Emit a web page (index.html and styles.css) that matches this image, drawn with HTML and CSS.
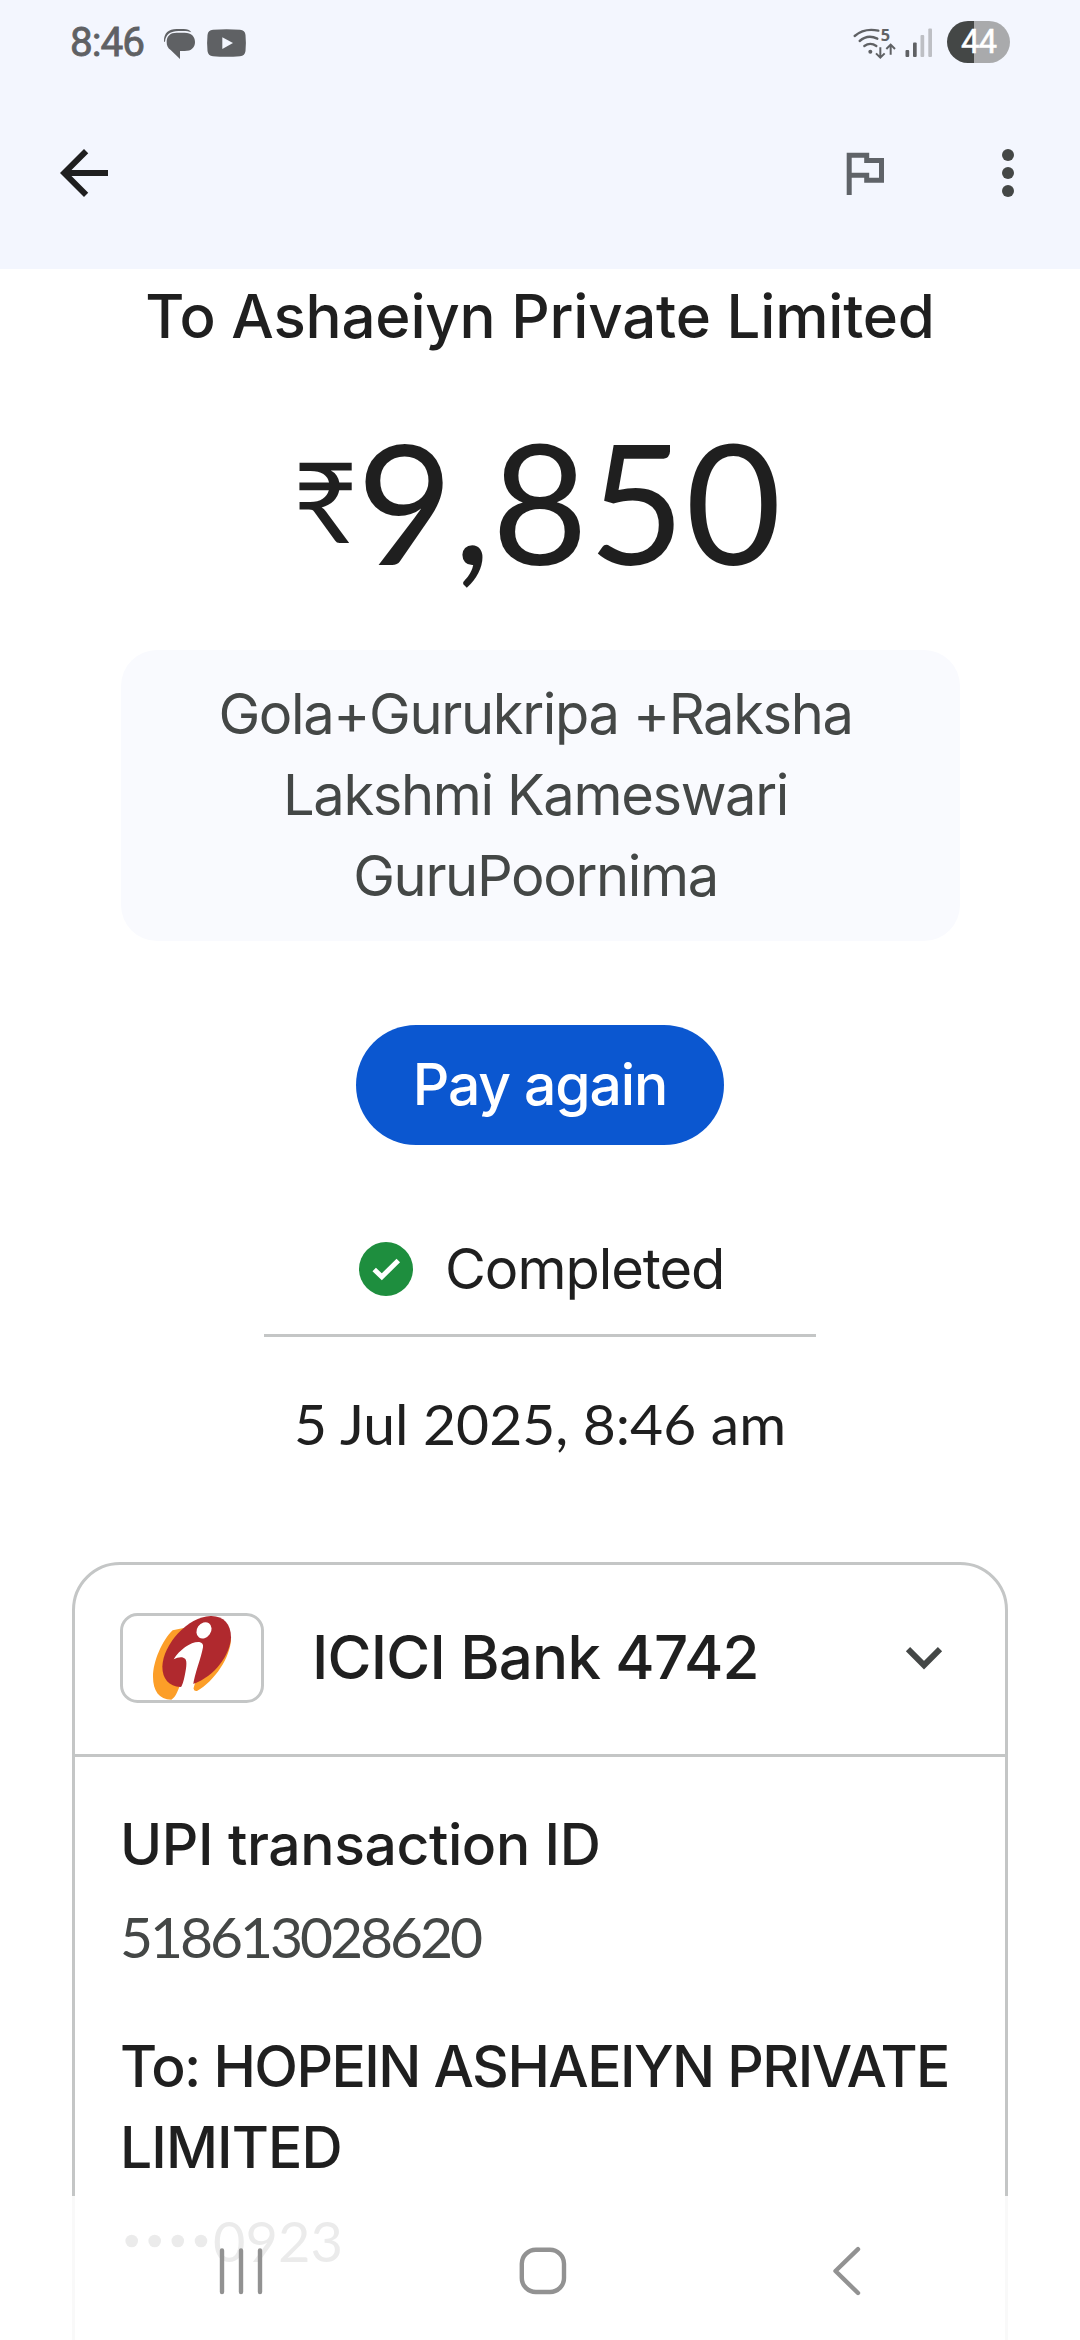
FILE: index.html
```html
<!DOCTYPE html>
<html lang="en">
<head>
<meta charset="utf-8">
<title>Transaction details</title>
<link rel="stylesheet" href="styles.css">
</head>
<body>
<div class="screen">
  <header class="top">
    <div class="status">
      <span class="clock">8:46</span>
      <svg class="chat" width="32" height="32" viewBox="342 84 96 96"><path fill="#5f6164" d="M342 125C341 98 356 87 380 87H401C412 87 419 90 424 97C417 94 410 93 401 93H385C362 93 347 103 345 125Z"/><path fill="#5f6164" d="M380 98H404C424 98 435 109 435 126C435 143 424 153 404 153H390V177L362 150C353 144 350 137 350 126C350 108 361 98 380 98Z"/></svg>
      <svg class="tube" width="39" height="28" viewBox="0 0 39 28"><path fill="#5f6164" d="M6 .8Q19.500-.5 33 .8Q38 1.200 38.500 6Q39.300 14 38.500 22Q38 26.700 33 27.200Q19.500 28.500 6 27.200Q1 26.700.5 22Q-.3 14 .5 6Q1 1.200 6 .8Z"/><path fill="#f3f6fe" d="M15.300 8.300v11.600L26 14.100z"/></svg>
      <span class="fill"></span>
      <svg class="wifi" width="43" height="45" viewBox="99 64 129 135"><g fill="none" stroke="#5f6164" stroke-width="7" stroke-linecap="round"><path d="M104 109Q133 84 175 93"/><path d="M119 124Q143 103 172 117"/><path d="M133 139Q151 126 169 139"/></g><circle cx="151" cy="156" r="6" fill="#5f6164"/><path fill="none" stroke="#5f6164" stroke-width="6" d="M181 143v31M168 161l13 13 13-13M212 165v-30M199 148l13-13 13 13"/><text class="band" x="182" y="124">5</text></svg>
      <svg class="bars" width="28" height="30" viewBox="0 0 28 30"><g fill="#5f6164"><rect x=".5" y="22" width="3.700" height="7" rx="1"/><rect x="8" y="14.500" width="3.700" height="14.500" rx="1"/></g><g fill="#bdbfc4"><rect x="15.500" y="7" width="3.700" height="22" rx="1"/><rect x="23.300" y=".5" width="3.700" height="28.500" rx="1"/></g></svg>
      <span class="battery">44</span>
    </div>
    <nav class="appbar">
      <svg width="72" height="72" viewBox="0 0 24 24"><path fill="#1f1f1f" d="M20 11H7.830l5.590-5.590L12 4l-8 8 8 8 1.410-1.410L7.830 13H20z"/></svg>
      <span class="fill"></span>
      <svg class="flag" width="40" height="44" viewBox="0 0 40 44"><path fill="none" stroke="#5f6368" stroke-width="5" d="M3.200 43V3.300H20.700V8.500H35.500V28.200H20.700V23.300H3.200"/></svg>
      <svg class="more" width="12" height="48" viewBox="0 0 12 48"><g fill="#444746"><circle cx="6" cy="6" r="6"/><circle cx="6" cy="24" r="6"/><circle cx="6" cy="42" r="6"/></g></svg>
    </nav>
  </header>

  <main>
    <h1 class="payee">To Ashaeiyn Private Limited</h1>
    <div class="amount"><span class="rupee">₹</span><span class="value">9,850</span></div>
    <p class="note">Gola+Gurukripa +Raksha<br>Lakshmi Kameswari<br>GuruPoornima</p>
    <button class="pay">Pay again</button>
    <div class="state">
      <svg width="54" height="54" viewBox="0 0 54 54"><circle cx="27" cy="27" r="27" fill="#1e8e3e"/><path fill="none" stroke="#fff" stroke-width="5" d="M15.200 27.500l7.600 7.300L39.300 18.500"/></svg>
      <span>Completed</span>
    </div>
    <div class="date">5 Jul 2025, 8:46 am</div>

    <section class="card">
      <div class="bank">
        <svg class="chip" width="144" height="90" viewBox="180 219 432 270"><path fill="#fc9e28" d="M338 271C306 302 279 365 279 410C279 452 297 478 334 479C347 472 352 456 360 436L420 380L400 446Q403 455 411 453C464 424 513 350 513 295L440 250Z"/><path fill="#b0292e" d="M452 228C490 227 513 252 513 292C511 345 462 411 401 431L361 441C327 439 307 416 307 380C309 313 383 230 452 228Z"/><path fill="#fff" d="M341 358C359 328 394 304 418 306Q431 309 429 322C424 352 403 404 399 438Q399 448 403 453L343 480Q367 441 372 417C379 387 382 365 376 357C367 348 354 352 341 358Z"/><ellipse cx="432" cy="271" rx="21" ry="26" fill="#fff" transform="rotate(35 432 271)"/><rect x="184.500" y="223.500" width="423" height="261" rx="48" fill="none" stroke="#c4c6c6" stroke-width="9"/></svg>
        <span class="bankname">ICICI Bank 4742</span>
        <span class="fill"></span>
        <svg width="36" height="22" viewBox="0 0 36 22"><path fill="none" stroke="#444746" stroke-width="6" d="M2 2.200L18 18.200 34 2.200"/></svg>
      </div>
      <div class="details">
        <div class="label upi">UPI transaction ID</div>
        <div class="number">518613028620</div>
        <div class="label to">To: HOPEIN ASHAEIYN PRIVATE<br><span class="limited">LIMITED</span></div>
        <div class="masked"><svg width="84" height="14" viewBox="0 0 84 14"><g fill="#444746"><circle cx="6.700" cy="7" r="6.300"/><circle cx="29.700" cy="7" r="6.300"/><circle cx="52.800" cy="7" r="6.300"/><circle cx="76" cy="7" r="6.300"/></g></svg><span>0923</span></div>
      </div>
    </section>
  </main>

  <nav class="sysnav">
    <svg width="1080" height="144" viewBox="0 0 1080 144"><g fill="none" stroke="#929292" stroke-width="4.400" stroke-linecap="round" stroke-linejoin="round"><path d="M222 54.500v41.500M241 54.500v41.500M260 54.500v41.500"/><rect x="521.800" y="53.800" width="42.200" height="42.200" rx="14"/><path d="M858 53.200L835.500 75 858 97"/></g></svg>
  </nav>
</div>
</body>
</html>
```
FILE: styles.css
```css
* { box-sizing: border-box; margin: 0; padding: 0; }
body { background: #fff; color: #1f1f1f; font-family: Inter, sans-serif; }
svg { display: block; flex: none; overflow: visible; }
.screen { position: relative; width: 1080px; height: 2340px; overflow: hidden; white-space: nowrap; }
.fill { flex: 1; }

.top { height: 269px; background: #f3f6fe; }
.status { display: flex; align-items: center; height: 84px; padding: 0 70px; }
.clock { width: 94px; font: 400 40.500px/83px Roboto, sans-serif; -webkit-text-stroke: .8px #5f6164; letter-spacing: -1px; color: #5f6164; }
.chat { margin-top: 4px; }
.tube { margin-left: 11px; margin-top: 1px; }
.wifi { margin-right: 9px; margin-top: 3px; }
.band { font: 700 49px "Open Sans", sans-serif; fill: #5f6164; }
.bars { margin-right: 14px; margin-top: 2px; }
.battery { width: 63px; height: 42px; border-radius: 21px; background: linear-gradient(90deg, #444746 27px, #a9aaac 27px); color: #fff; font: 400 33px/41px Roboto, sans-serif; -webkit-text-stroke: .5px #fff; letter-spacing: -1px; text-align: center; }
.appbar { display: flex; align-items: center; height: 178px; padding: 0 66px 0 48px; }
.flag { margin-right: 116px; margin-top: 2px; }

main { display: flex; flex-direction: column; align-items: center; }
.payee { height: 96px; font-size: 60px; font-weight: 500; line-height: 94px; letter-spacing: -.2px; }
.amount { display: flex; align-items: flex-start; margin-top: 51px; height: 180px; font-family: Lato, sans-serif; font-weight: 400; }
.rupee { width: 64px; margin-left: -5px; font-size: 112px; line-height: 168px; }
.value { font-size: 166px; line-height: 169px; letter-spacing: .5px; }
.note { width: 839px; height: 291px; margin-top: 54px; padding: 24px 9px 24px 0; border-radius: 36px; background: #f9fafe; color: #444746; font-size: 56px; line-height: 81px; letter-spacing: -1.350px; text-align: center; }
.pay { width: 368px; height: 120px; margin-top: 84px; border: 0; border-radius: 60px; background: #0b57d0; color: #fff; font: 500 57px/120px Inter, sans-serif; letter-spacing: -1.100px; }
.state { display: flex; align-items: center; gap: 32px; width: 552px; height: 139px; margin-top: 53px; padding: 6px 0 0 95px; border-bottom: 3px solid #c4c6c6; font-size: 56px; letter-spacing: -1.050px; }
.date { height: 100px; margin-top: 36px; margin-bottom: 89px; font: 400 57px/100px Lato, sans-serif; }
.card { width: 936px; height: 860px; border: 3px solid #c4c6c6; border-radius: 48px; }
.bank { display: flex; align-items: center; height: 192px; padding: 0 63px 3px 45px; border-bottom: 3px solid #c4c6c6; }
.bankname { margin: -3px 0 0 48px; font-size: 60px; font-weight: 500; letter-spacing: -.8px; }
.details { padding: 47px 45px; }
.label { font-size: 57px; font-weight: 500; line-height: 81px; }
.upi { letter-spacing: -.4px; }
.number { margin-top: 11px; font: 400 57px/81px Lato, sans-serif; letter-spacing: -3.050px; color: #444746; }
.to { margin-top: 49px; letter-spacing: -1.550px; }
.limited { letter-spacing: -.9px; }
.masked { display: flex; align-items: center; gap: 4px; height: 81px; margin-top: 12px; padding-left: 5px; font: 400 56px/81px Lato, sans-serif; color: #444746; }
.sysnav { position: absolute; left: 0; bottom: 0; width: 1080px; height: 144px; background: rgba(255, 255, 255, .893); }
```
